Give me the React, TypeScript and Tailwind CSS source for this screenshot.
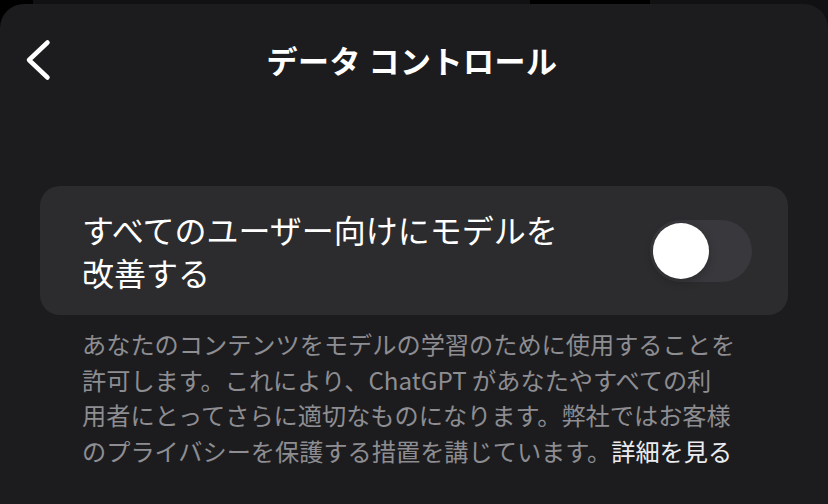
export default function App() {
  return (
    <div className="w-[828px] h-[504px] bg-black overflow-hidden flex flex-col font-['Noto_Sans_CJK_JP','Noto_Sans',sans-serif]">
      <div className="flex h-[28px] shrink-0">
        <div className="w-[33px] bg-black" />
        <div className="w-[497px] bg-[#111113]" />
        <div className="w-[120px] bg-black" />
        <div className="flex-1 bg-[#111113]" />
      </div>
      <div className="relative -mt-[24px] flex-1 bg-[#1c1c1e] rounded-t-[24px] flex flex-col">
        <div className="h-[110px] grid grid-cols-[1fr_auto_1fr] items-center shrink-0">
          <div className="pl-[24px] flex items-center pt-[2px]">
            <svg width="28" height="44" viewBox="0 0 28 44" fill="none">
              <path d="M23.5 4.5 L5 22 L23.5 39.5" stroke="#ffffff" strokeWidth="4.5" strokeLinecap="round" strokeLinejoin="round" />
            </svg>
          </div>
          <div className="text-white text-[31px] font-bold leading-none tracking-[0.5px] pr-[4px]">データ コントロール</div>
          <div />
        </div>
        <div className="mt-[72px] mx-[40px] h-[129px] rounded-[20px] bg-[#2c2c2e] pl-[42px] pr-[36px] flex items-center justify-between">
          <div className="text-[32px] leading-[43px] text-white whitespace-nowrap">
            すべてのユーザー向けにモデルを
            <br />
            改善する
          </div>
          <div className="w-[102px] h-[62px] rounded-full bg-[#39393d] flex items-center pl-[3px]">
            <div className="w-[56px] h-[56px] rounded-full bg-white shadow-[0_3px_8px_rgba(0,0,0,0.25)]" />
          </div>
        </div>
        <div className="mt-[11px] pl-[82px] text-[24.2px] leading-[35.5px] text-[#8d8d92] whitespace-nowrap">
          あなたのコンテンツをモデルの学習のために使用することを
          <br />
          許可します。これにより、ChatGPT があなたやすべての利
          <br />
          用者にとってさらに適切なものになります。弊社ではお客様
          <br />
          のプライバシーを保護する措置を講じています。<span className="text-[#ececf0]">詳細を見る</span>
        </div>
      </div>
    </div>
  );
}
